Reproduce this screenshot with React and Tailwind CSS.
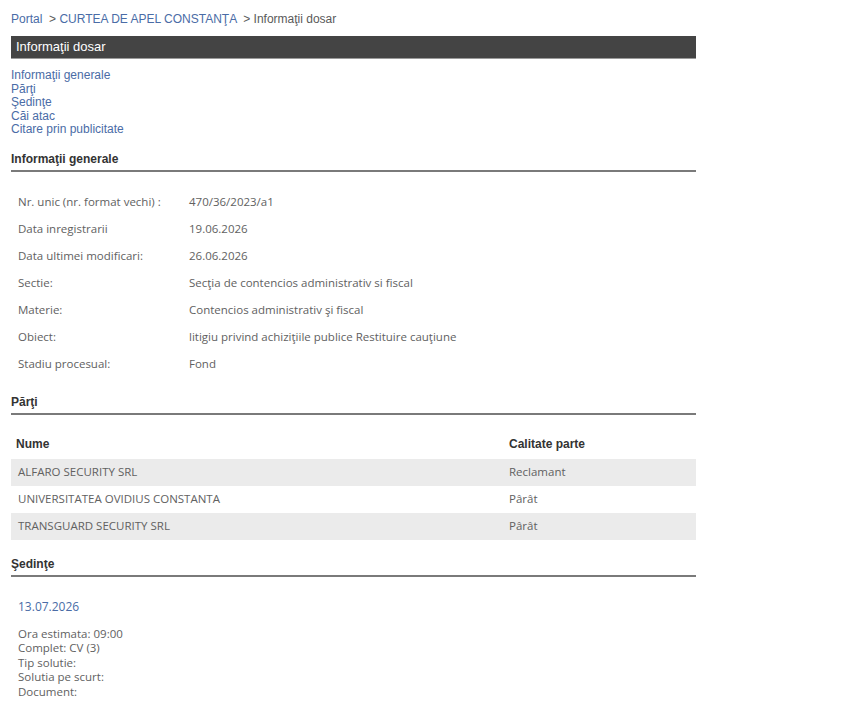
import React from 'react';

const info = [
  ['Nr. unic (nr. format vechi) :', '470/36/2023/a1'],
  ['Data inregistrarii', '19.06.2026'],
  ['Data ultimei modificari:', '26.06.2026'],
  ['Sectie:', 'Secţia de contencios administrativ si fiscal'],
  ['Materie:', 'Contencios administrativ şi fiscal'],
  ['Obiect:', 'litigiu privind achiziţiile publice Restituire cauţiune'],
  ['Stadiu procesual:', 'Fond'],
];

const parti = [
  ['ALFARO SECURITY SRL', 'Reclamant'],
  ['UNIVERSITATEA OVIDIUS CONSTANTA', 'Pârât'],
  ['TRANSGUARD SECURITY SRL', 'Pârât'],
];

const sans = "font-['Liberation_Sans',Arial,sans-serif]";
const body = "font-['Open_Sans',sans-serif] text-[11.5px] text-[#616161]";

// section title with grey rule underneath
function SectionTitle({ children, className = '' }) {
  return (
    <div className={`${sans} text-[12px] leading-[16px] font-bold text-[#333] pb-[3px] border-b-2 border-[#7a7a7a] ${className}`}>
      {children}
    </div>
  );
}

export default function App() {
  return (
    <div className="min-h-screen w-full bg-white pl-[11px] pt-[11px] pb-[20px]">
      <div className="w-[685px]">
        {/* breadcrumb */}
        <div className={`${sans} text-[12px] leading-[16px] text-[#5a5a5a]`}>
          <a className="text-[#4a6ca6]">Portal</a>
          <span> &nbsp;&gt; </span>
          <a className="text-[#4a6ca6]">CURTEA DE APEL CONSTANŢA</a>
          <span> &nbsp;&gt; Informaţii dosar</span>
        </div>

        <div className={`${sans} mt-[9px] h-[23px] bg-[#444] border-b border-[#9a9a9a] text-white text-[13px] leading-[22px] pl-[5px]`}>
          Informaţii dosar
        </div>

        <div className={`${sans} mt-[10px] flex flex-col text-[12px] leading-[13.5px] text-[#4a6ca6]`}>
          <a>Informaţii generale</a>
          <a>Părţi</a>
          <a>Şedinţe</a>
          <a>Căi atac</a>
          <a>Citare prin publicitate</a>
        </div>

        <SectionTitle className="mt-[14px]">Informaţii generale</SectionTitle>
        <div className={`mt-[17px] ${body}`}>
          {info.map(([k, v]) => (
            <div key={k} className="flex h-[27px] items-center pl-[7px]">
              <div className="w-[171px] shrink-0">{k}</div>
              <div>{v}</div>
            </div>
          ))}
        </div>

        <SectionTitle className="mt-[16px]">Părţi</SectionTitle>
        <div className="mt-[15px]">
          <div className={`${sans} grid grid-cols-[491px_1fr] h-[29px] items-center text-[12px] font-bold text-[#333]`}>
            <div className="pl-[5px]">Nume</div>
            <div className="pl-[7px]">Calitate parte</div>
          </div>
          {parti.map(([n, c], i) => (
            <div
              key={n}
              className={`grid grid-cols-[491px_1fr] h-[27px] items-center ${body} ${i % 2 === 0 ? 'bg-[#ebebeb]' : 'bg-white'}`}
            >
              <div className="pl-[7px]">{n}</div>
              <div className="pl-[7px]">{c}</div>
            </div>
          ))}
        </div>

        <SectionTitle className="mt-[16px]">Şedinţe</SectionTitle>
        <div className={`pl-[7px] mt-[22px] ${body}`}>
          <div className="text-[#4a6ca6] text-[12px] leading-[16px]">13.07.2026</div>
          <div className="mt-[12px] flex flex-col leading-[14.5px]">
            <span>Ora estimata: 09:00</span>
            <span>Complet: CV (3)</span>
            <span>Tip solutie:</span>
            <span>Solutia pe scurt:</span>
            <span>Document:</span>
          </div>
        </div>
      </div>
    </div>
  );
}
